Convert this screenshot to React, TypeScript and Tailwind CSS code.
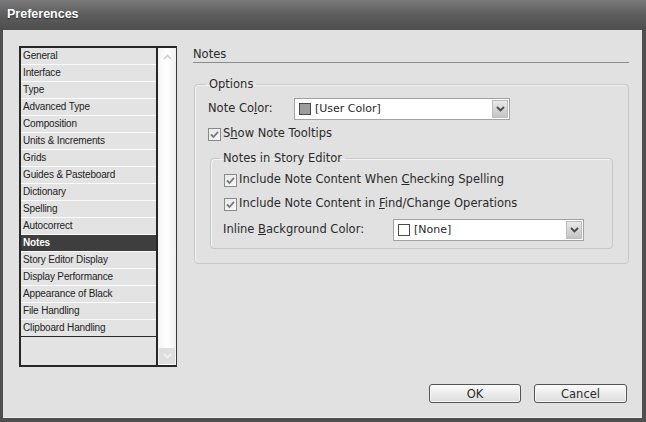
import React from 'react';

const ITEMS = [
  'General',
  'Interface',
  'Type',
  'Advanced Type',
  'Composition',
  'Units & Increments',
  'Grids',
  'Guides & Pasteboard',
  'Dictionary',
  'Spelling',
  'Autocorrect',
  'Notes',
  'Story Editor Display',
  'Display Performance',
  'Appearance of Black',
  'File Handling',
  'Clipboard Handling',
];

const FONT = { fontFamily: '"Liberation Sans", Arial, sans-serif' };
const BODY_FONT = { fontFamily: '"DejaVu Sans", Verdana, sans-serif' };

function Check() {
  return (
    <span className="w-[13px] h-[13px] border border-[#8a8a8a] bg-gradient-to-br from-[#e6e6e6] to-[#fafafa] flex items-center justify-center shrink-0">
      <svg width="9" height="9" viewBox="0 0 9 9">
        <path d="M1 4.5 L3.5 7 L8 1.8" fill="none" stroke="#7a7a7a" strokeWidth="1.8" />
      </svg>
    </span>
  );
}

function Chevron() {
  return (
    <svg width="9" height="6" viewBox="0 0 9 6">
      <path d="M1 1 L4.5 4.5 L8 1" fill="none" stroke="#4a4a4a" strokeWidth="1.8" />
    </svg>
  );
}

function Dropdown({ width, swatch, label }: { width: string; swatch: string; label: string }) {
  return (
    <div className={`${width} h-[22px] border border-[#a2a2a2] bg-white flex items-center pl-[4px] pr-[1px]`}>
      <span className={`w-[12px] h-[12px] border border-[#4a4a4a] ${swatch} shrink-0`} />
      <span className="ml-[4px] flex-1 text-[11px] text-[#2a2a2a]">{label}</span>
      <span className="w-[16px] h-[18px] bg-gradient-to-b from-[#e9e9e9] to-[#c4c4c4] border border-[#bdbdbd] flex items-center justify-center">
        <Chevron />
      </span>
    </div>
  );
}

export default function App() {
  return (
    <div className="w-[646px] h-[422px] bg-[#4f4f4f] flex flex-col overflow-hidden" style={FONT}>
      {/* title bar */}
      <div className="h-[30px] shrink-0 bg-gradient-to-b from-[#7a7a7a] via-[#5c5c5c] to-[#4e4e4e] flex items-center pl-[7px] pb-[1px]">
        <span className="text-white font-bold text-[12.5px] [text-shadow:0_1px_1px_#2a2a2a]">Preferences</span>
      </div>

      <div className="flex-1 ml-[3px] mr-[4px] mb-[4px] bg-[#e1e1e1] flex flex-col border-b border-[#ececec]">
        <div className="flex pl-[16px] pt-[16px]">
          {/* category list */}
          <div className="w-[158px] h-[321px] flex border-t-2 border-l-2 border-b-2 border-[#262626] border-r border-r-[#3a3a3a]">
            <div className="w-[137px] bg-[#e3e3e3] border-r-2 border-[#262626] flex flex-col">
              {ITEMS.map((it, i) => (
                <div
                  key={it}
                  className={`h-[17px] leading-[16px] pl-[2px] text-[10px] tracking-[-0.15px] border-b ${
                    i === ITEMS.length - 1 ? 'border-[#2a2a2a]' : 'border-[#fbfbfb]'
                  } ${it === 'Notes' ? 'bg-[#3e3e3e] text-white font-bold' : 'text-[#222]'}`}
                >
                  {it}
                </div>
              ))}
            </div>
            <div className="flex-1 bg-gradient-to-r from-[#f4f4f4] via-white to-[#f0f0f0] flex flex-col justify-between">
              <div className="h-[17px] flex items-center justify-center">
                <svg width="9" height="6" viewBox="0 0 9 6">
                  <path d="M1 5 L4.5 1.5 L8 5" fill="none" stroke="#cfcfcf" strokeWidth="1.6" />
                </svg>
              </div>
              <div className="h-[16px] mx-[1px] mb-[1px] bg-[#dedede] flex items-center justify-center">
                <svg width="9" height="6" viewBox="0 0 9 6">
                  <path d="M1 1 L4.5 4.5 L8 1" fill="none" stroke="#f2f2f2" strokeWidth="1.6" />
                </svg>
              </div>
            </div>
          </div>

          {/* right panel */}
          <div className="ml-[16px] w-[436px] text-[#2a2a2a]" style={BODY_FONT}>
            <div className="h-[17px] leading-[15px] pt-[1px] text-[11.5px] border-b border-[#8c8c8c]">Notes</div>

            <fieldset className="mt-[14px] ml-[1px] w-[435px] border border-[#c8c8c8] rounded-[4px] pl-[13px] pb-[14px] shadow-[inset_1px_1px_0_#f3f3f3]">
              <legend className="-ml-[2px] px-[3px] text-[11.5px] leading-[15px]">Options</legend>

              <div className="mt-[6px] flex items-center h-[22px]">
                <span className="w-[86px] text-[11.5px]">
                  Note Co<span className="underline">l</span>or:
                </span>
                <Dropdown width="w-[216px]" swatch="bg-[#9c9c9c]" label="[User Color]" />
              </div>

              <div className="mt-[6px] flex items-center h-[16px] text-[11.5px]">
                <Check />
                <span className="ml-[2px]">
                  S<span className="underline">h</span>ow Note Tooltips
                </span>
              </div>

              <fieldset className="mt-[9px] ml-[2px] w-[403px] border border-[#c8c8c8] rounded-[4px] pl-[13px] pb-[7px] shadow-[inset_1px_1px_0_#f3f3f3]">
                <legend className="-ml-[4px] px-[3px] text-[11.5px] leading-[15px]">Notes in Story Editor</legend>

                <div className="mt-[6px] flex items-center h-[16px] text-[11.5px]">
                  <Check />
                  <span className="ml-[2px]">
                    Include Note Content When <span className="underline">C</span>hecking Spelling
                  </span>
                </div>
                <div className="mt-[8px] flex items-center h-[16px] text-[11.5px]">
                  <Check />
                  <span className="ml-[2px]">
                    Include Note Content in <span className="underline">F</span>ind/Change Operations
                  </span>
                </div>
                <div className="mt-[7px] flex items-center h-[22px]">
                  <span className="w-[170px] -ml-[1px] text-[11.5px]">
                    Inline <span className="underline">B</span>ackground Color:
                  </span>
                  <Dropdown width="w-[191px]" swatch="bg-white" label="[None]" />
                </div>
              </fieldset>
            </fieldset>
          </div>
        </div>

        {/* buttons */}
        <div className="mt-auto flex justify-end gap-[13px] pr-[15px] pb-[14px]" style={BODY_FONT}>
          <button className="w-[92px] h-[19px] rounded-[3px] border border-[#555] bg-gradient-to-b from-[#fcfcfc] to-[#dcdcdc] text-[11.5px] leading-[16px] text-[#2a2a2a] shadow-[inset_0_0_0_1px_#f6f6f6]">
            OK
          </button>
          <button className="w-[93px] h-[19px] rounded-[3px] border border-[#555] bg-gradient-to-b from-[#fcfcfc] to-[#dcdcdc] text-[11.5px] leading-[16px] text-[#2a2a2a] shadow-[inset_0_0_0_1px_#f6f6f6]">
            Cancel
          </button>
        </div>
      </div>
    </div>
  );
}
